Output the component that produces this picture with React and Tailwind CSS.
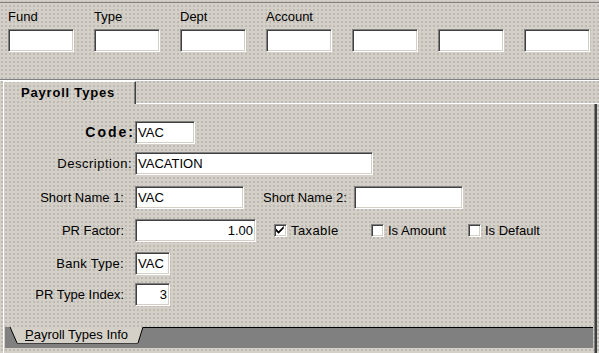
import React from 'react';

// Payroll Types maintenance form (classic Win32 look)

const FONT = "font-['Liberation_Sans',Arial,sans-serif]";

function Field({ w, value = '', right = false }) {
  return (
    <div
      className={`h-[23px] ${w} bg-white border border-t-[#808080] border-l-[#808080] border-b-white border-r-white shadow-[inset_1px_1px_0_#404040,inset_-1px_-1px_0_#d4d0c8] flex items-center px-[2px] ${right ? 'justify-end' : ''}`}
    >
      <span className="leading-[15px]">{value}</span>
    </div>
  );
}

function Check({ checked, label, track = '' }) {
  return (
    <div className="w-[97px] flex items-center">
      <div className="w-[13px] h-[13px] bg-white border border-t-[#808080] border-l-[#808080] border-b-white border-r-white shadow-[inset_1px_1px_0_#404040,inset_-1px_-1px_0_#d4d0c8] flex items-center justify-center">
        {checked && (
          <svg width="9" height="9" viewBox="0 0 7 7">
            <path d="M0 2 L2 4 L6 0 L6 2 L2 6 L0 4 Z" fill="#000" />
          </svg>
        )}
      </div>
      <span className={`ml-[4px] leading-[15px] ${track}`}>{label}</span>
    </div>
  );
}

function Row({ label, cls = '', mt, children }) {
  return (
    <div className={`flex items-center ${mt}`}>
      <div className={`w-[131px] text-right leading-[15px] ${cls}`}>{label}</div>
      {children}
    </div>
  );
}

export default function App() {
  const top = ['Fund', 'Type', 'Dept', 'Account', '', '', ''];

  return (
    <div
      className={`w-[599px] h-[353px] bg-[#d4d0c8] bg-[radial-gradient(circle,#9a9a9a_0.5px,transparent_0.85px)] bg-size-[4px_4px] overflow-hidden flex flex-col text-[13px] text-black ${FONT}`}
    >
      <div className="h-[2px]" />

      {/* account key header */}
      <div className="h-[77px] border-t border-[#808080] flex gap-[20px] pl-[8px] pt-[6px]">
        {top.map((t, i) => (
          <div key={i} className="flex flex-col">
            <div className="h-[15px] leading-[15px]">{t}</div>
            <div className="mt-[5px]">
              <Field w="w-[66px]" />
            </div>
          </div>
        ))}
      </div>
      <div className="h-px bg-[#808080]" />
      <div className="h-px bg-white" />

      {/* tab header */}
      <div className="h-[23px] flex">
        <div className="ml-[3px] w-[133px] border-l border-t border-white border-r border-r-[#404040] shadow-[inset_-1px_0_0_#808080] pt-[3px] pl-[17px] font-bold leading-[15px] tracking-[0.8px]">
          Payroll Types
        </div>
        <div className="flex-1 border-b border-white" />
      </div>

      {/* panel */}
      <div className="flex-1 flex flex-col ml-[3px] mr-[2px] border-l border-white border-r-2 border-r-[#404040] shadow-[inset_-1px_0_0_#808080]">
        <div className="flex-1 flex flex-col">
          <Row label="Code:" cls="font-bold text-[14px] tracking-[2px] pr-0" mt="mt-[17px]">
            <Field w="w-[60px]" value="VAC" />
          </Row>
          <Row label="Description:" cls="tracking-[0.5px] pr-[3px]" mt="mt-[8px]">
            <Field w="w-[238px]" value="VACATION" />
          </Row>
          <Row label="Short Name 1:" cls="pr-[11px]" mt="mt-[11px]">
            <Field w="w-[109px]" value="VAC" />
            <span className="ml-[19px] mr-[7px] leading-[15px]">Short Name 2:</span>
            <Field w="w-[109px]" />
          </Row>
          <Row label="PR Factor:" cls="pr-[11px]" mt="mt-[10px]">
            <Field w="w-[121px]" value="1.00" right />
            <div className="ml-[18px] flex">
              <Check checked label="Taxable" track="tracking-[0.4px]" />
              <Check label="Is Amount" />
              <Check label="Is Default" />
            </div>
          </Row>
          <Row label="Bank Type:" cls="tracking-[0.3px] pr-[11px]" mt="mt-[10px]">
            <Field w="w-[35px]" value="VAC" />
          </Row>
          <Row label="PR Type Index:" cls="pr-[11px]" mt="mt-[8px]">
            <Field w="w-[35px]" value="3" right />
          </Row>
        </div>

        {/* bottom tab strip */}
        <div className="h-[21px] ml-[1px] mr-[2px] mb-[5px] flex">
          <div className="relative w-[140px] h-full">
            <svg className="absolute inset-0" width="140" height="21" viewBox="0 0 140 21">
              <rect x="0" y="0" width="140" height="21" fill="#808080" />
              <polygon points="5,0 138,0 133,16 12,16" fill="#d4d0c8" />
              <line x1="5" y1="0" x2="12" y2="16" stroke="#000" strokeWidth="1" />
              <line x1="138" y1="0" x2="133" y2="16" stroke="#000" strokeWidth="1" />
              <line x1="12" y1="16.5" x2="133" y2="16.5" stroke="#404040" strokeWidth="1" />
              <line x1="138" y1="0.5" x2="140" y2="0.5" stroke="#000" strokeWidth="1" />
            </svg>
            <span className="relative block pl-[20px] pt-[1px] leading-[14px]">
              <span className="underline">P</span>ayroll Types Info
            </span>
          </div>
          <div className="flex-1 bg-[#808080] border-t border-black" />
        </div>
      </div>
    </div>
  );
}
